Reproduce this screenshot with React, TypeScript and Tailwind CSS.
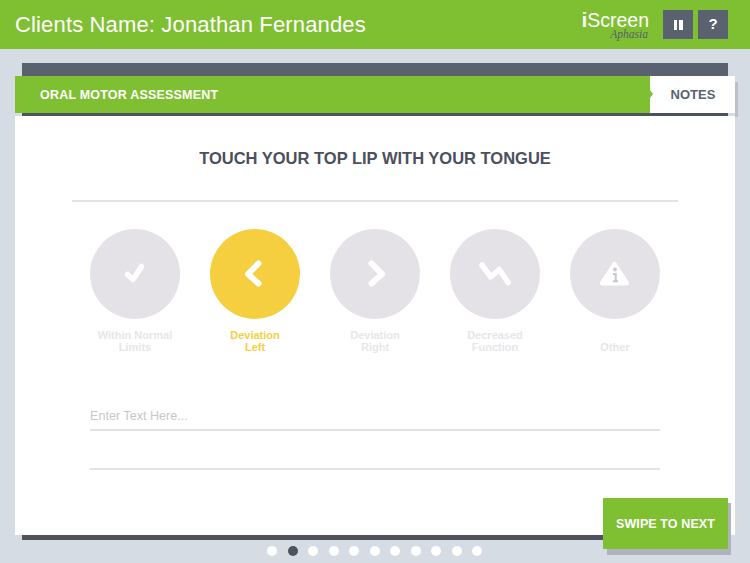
const options = [
  { label: ['Within Normal', 'Limits'], icon: 'check' },
  { label: ['Deviation', 'Left'], icon: 'left', active: true },
  { label: ['Deviation', 'Right'], icon: 'right' },
  { label: ['Decreased', 'Function'], icon: 'zig' },
  { label: ['Other'], icon: 'info' },
];

function OptionIcon({ name }: { name: string }) {
  const line = { fill: 'none', stroke: 'white', strokeLinecap: 'round', strokeLinejoin: 'round' } as const;
  return (
    <svg width="40" height="40" viewBox="0 0 40 40">
      {name === 'check' && <path d="M12.5 20.5 L18 25.5 L26.5 12.5" strokeWidth="5.5" {...line} />}
      {name === 'left' && <path d="M23.5 9.5 L13 20 L23.5 29.5" strokeWidth="6" {...line} />}
      {name === 'right' && <path d="M16.5 9.5 L27 20 L16.5 29.5" strokeWidth="6" {...line} />}
      {name === 'zig' && <path d="M7 11 L15.7 22.8 L24.3 15.5 L33.3 28.8" strokeWidth="5.5" {...line} />}
      {name === 'info' && (
        <>
          <path d="M19.5 10.5 L31.5 29 L7.5 29 Z" fill="white" stroke="white" strokeWidth="5" strokeLinejoin="round" />
          <circle cx="20" cy="15.5" r="1.9" fill="#c9c6cc" />
          <path d="M18 20 H20.7 V27 M18 27.2 H23" fill="none" stroke="#c9c6cc" strokeWidth="2" />
        </>
      )}
    </svg>
  );
}

export default function App() {
  return (
    <div className="relative flex h-[563px] w-[750px] flex-col overflow-hidden bg-[#d5dce4] font-['Liberation_Sans',Arial,sans-serif]">
      <header className="flex h-[49px] shrink-0 items-center bg-[#7fc033] pl-[15px] pr-[22px]">
        <h1 className="text-[22px] tracking-[0.15px] text-white">Clients Name: Jonathan Fernandes</h1>
        <div className="ml-auto mr-[14px] mt-[4px] flex flex-col items-end">
          <div className="text-[19.5px] leading-[16px] text-white"><b>i</b>Screen</div>
          <div className="mr-[1px] font-['Liberation_Serif',serif] text-[11.5px] italic leading-[13px] text-[#55606a]">Aphasia</div>
        </div>
        <button className="mr-[5px] flex h-[29px] w-[30px] items-center justify-center gap-[2px] bg-[#5a6270]">
          <span className="h-[10px] w-[3.5px] bg-white" />
          <span className="h-[10px] w-[3.5px] bg-white" />
        </button>
        <button className="flex h-[29px] w-[30px] items-center justify-center bg-[#5a6270] text-[15px] font-bold text-white">?</button>
      </header>

      <main className="relative mx-[15px] mt-[14px] flex h-[477px] flex-col">
        <div className="mx-[7px] h-[13px] shrink-0 bg-[#5a6270]" />
        <div className="relative flex h-[37px] shrink-0">
          <div className="flex w-[635px] items-center bg-[#7fc033] pl-[25px] pt-[1px] text-[12.5px] font-bold tracking-[0.2px] text-white">ORAL MOTOR ASSESSMENT</div>
          <div className="flex flex-1 items-center justify-center bg-white pl-[1px] text-[13px] font-bold text-[#5a6270]">NOTES</div>
          <div className="absolute left-[635px] top-[14px] h-0 w-0 border-y-[4px] border-l-[3px] border-y-transparent border-l-[#7fc033]" />
          <div className="absolute -right-[3px] top-[6px] h-[35px] w-[3px] bg-[#bcc1c9]" />
        </div>
        <div className="mx-[7px] h-[3px] shrink-0 bg-[#4c525e]" />

        <section className="relative flex h-[419px] shrink-0 flex-col items-center bg-white">
          <h2 className="mt-[32px] text-[16.5px] font-bold leading-[20px] text-[#4a505c]">TOUCH YOUR TOP LIP WITH YOUR TONGUE</h2>
          <div className="mt-[32px] h-[2px] w-[606px] bg-[#e1e3e7]" />
          <div className="mt-[27px] flex w-[600px]">
            {options.map((option) => (
              <div key={option.icon} className="flex w-[120px] flex-col items-center">
                <div className={`flex h-[90px] w-[90px] items-center justify-center rounded-full ${option.active ? 'bg-[#f5cf3f]' : 'bg-[#e4e1e7]'}`}>
                  <OptionIcon name={option.icon} />
                </div>
                <div className={`mt-[10px] flex h-[24px] flex-col justify-end text-center text-[11px] font-bold leading-[12px] ${option.active ? 'text-[#f5cf3f]' : 'text-[#e8e6ea]'}`}>
                  {option.label.map((text) => <div key={text}>{text}</div>)}
                </div>
              </div>
            ))}
          </div>
          <div className="mt-[50px] h-[28px] w-[570px] border-b-2 border-[#e1e3e7] text-[12.6px] leading-[26px] text-[#c8c8c8]">Enter Text Here...</div>
          <div className="mt-[37px] h-[2px] w-[570px] bg-[#e1e3e7]" />
        </section>

        <div className="mx-[7px] h-[5px] shrink-0 bg-[#4c525e]" />
      </main>

      <div className="mt-[6px] flex justify-center gap-[10.5px] pr-[1px]">
        {Array.from({ length: 11 }).map((_, i) => (
          <span key={i} className={`h-[10px] w-[10px] rounded-full ${i === 1 ? 'bg-[#4c525e]' : 'bg-white'}`} />
        ))}
      </div>

      <div className="absolute left-[607px] top-[503px] h-[52px] w-[124px] bg-[#aeb3bd]" />
      <button className="absolute left-[603px] top-[498px] flex h-[51px] w-[125px] items-center justify-center bg-[#7fc033] pt-[1px] text-[12.5px] font-bold tracking-[0.1px] text-white">SWIPE TO NEXT</button>
    </div>
  );
}
